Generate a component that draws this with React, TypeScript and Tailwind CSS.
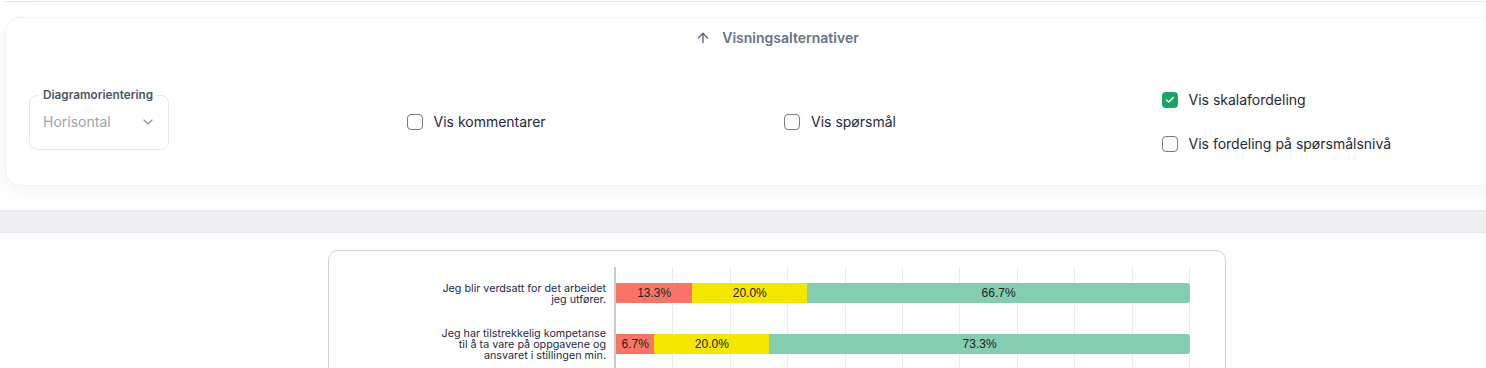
import { ArrowUp, Check, ChevronDown } from "lucide-react";

const ui = { fontFamily: "Inter, 'Noto Sans', sans-serif" };
const num = { fontFamily: "'Liberation Sans', Arial, sans-serif" };

type Row = { label: string[]; parts: number[] };

const rows: Row[] = [
  { label: ["Jeg blir verdsatt for det arbeidet", "jeg utfører."], parts: [13.3, 20.0, 66.7] },
  {
    label: ["Jeg har tilstrekkelig kompetanse", "til å ta vare på oppgavene og", "ansvaret i stillingen min."],
    parts: [6.7, 20.0, 73.3],
  },
];

const colors = ["bg-[#f87467]", "bg-[#f5e600]", "bg-[#84cdb1]"];

function Box({ checked, label }: { checked?: boolean; label: string }) {
  return (
    <label className="flex items-center gap-[11px] h-5 cursor-pointer">
      {checked ? (
        <span className="w-4 h-4 rounded-[4px] bg-[#1aa464] flex items-center justify-center">
          <Check className="w-2.5 h-2.5 text-white" strokeWidth={3.5} />
        </span>
      ) : (
        <span className="w-4 h-4 rounded-[4px] border-[1.5px] border-[#727a86] bg-white" />
      )}
      <span className="text-sm text-[#1e293b]">{label}</span>
    </label>
  );
}

function Grid() {
  return (
    <div className="absolute inset-0 flex pointer-events-none">
      {Array.from({ length: 10 }).map((_, i) => (
        <div key={i} className="flex-1 border-r border-[#ebecef]" />
      ))}
    </div>
  );
}

export default function App() {
  return (
    <div className="w-[1554px] bg-white" style={ui}>
      {/* top rule */}
      <div className="mx-[5px] pt-px">
        <div className="border-t border-[#e6e7ea]" />
      </div>

      {/* options panel */}
      <div className="px-[5px] pt-[15px] pb-6">
        <div className="rounded-2xl border border-[#f1f2f4] bg-white shadow-[0_6px_22px_rgba(15,23,42,0.05)] px-[23px] pt-[10px] pb-[31px]">
          <button className="mx-auto flex items-center gap-[11px] h-5 text-sm font-semibold text-[#64748b]">
            <ArrowUp className="w-4 h-4 text-[#5b6675]" strokeWidth={2} />
            Visningsalternativer
          </button>

          <div className="grid grid-cols-4 gap-[14px] mt-[42px] items-center h-16">
            <div className="self-start -mt-[2px]">
              <fieldset className="w-[140px] rounded-lg border border-[#e5e7eb]">
                <legend className="ml-[9px] px-1 text-[11.75px] leading-[14px] font-semibold text-[#4b5563]">
                  Diagramorientering
                </legend>
                <div className="h-[47px] pb-[7px] pl-[13px] pr-[12px] flex items-center justify-between">
                  <span className="text-sm text-[#9ca3af]">Horisontal</span>
                  <ChevronDown className="w-4 h-4 text-[#8a919c]" strokeWidth={1.75} />
                </div>
              </fieldset>
            </div>
            <Box label="Vis kommentarer" />
            <Box label="Vis spørsmål" />
            <div className="flex flex-col gap-6">
              <Box checked label="Vis skalafordeling" />
              <Box label="Vis fordeling på spørsmålsnivå" />
            </div>
          </div>
        </div>
      </div>

      {/* divider band */}
      <div className="h-[23px] bg-[#eeeff2] border-y border-[#e7e8ec]" />

      {/* chart card */}
      <div className="pt-[17px]">
        <div className="w-[898px] ml-[328px] rounded-[10px] border border-[#cfd2d7] pt-4 pb-8">
          <div className="flex">
            <div className="w-[277px] shrink-0" />
            <div className="w-2 shrink-0" />
            <div className="relative w-[576px] border-l-2 border-[#c8cbd1]">
              <Grid />
            </div>
          </div>

          {rows.map((r, i) => (
            <div key={i} className="flex h-[51px]">
              <div className="w-[277px] shrink-0 flex flex-col justify-center items-end text-right text-[10.75px] leading-[11px] text-[#1e2a4a] whitespace-nowrap pt-[2px]">
                {r.label.map((l) => (
                  <span key={l}>{l}</span>
                ))}
              </div>
              <div className="w-2 shrink-0" />
              <div className="relative w-[576px] border-l-2 border-[#c8cbd1] flex items-center">
                <Grid />
                <div className="relative flex h-5 w-full" style={num}>
                  {r.parts.map((p, k) => (
                    <div
                      key={k}
                      className={`${colors[k]} ${k === 2 ? "rounded-r-[3px]" : ""} flex items-center justify-center text-[12px] text-[#222]`}
                      style={{ width: `${p}%` }}
                    >
                      {p.toFixed(1)}%
                    </div>
                  ))}
                </div>
              </div>
            </div>
          ))}
        </div>
      </div>
    </div>
  );
}
